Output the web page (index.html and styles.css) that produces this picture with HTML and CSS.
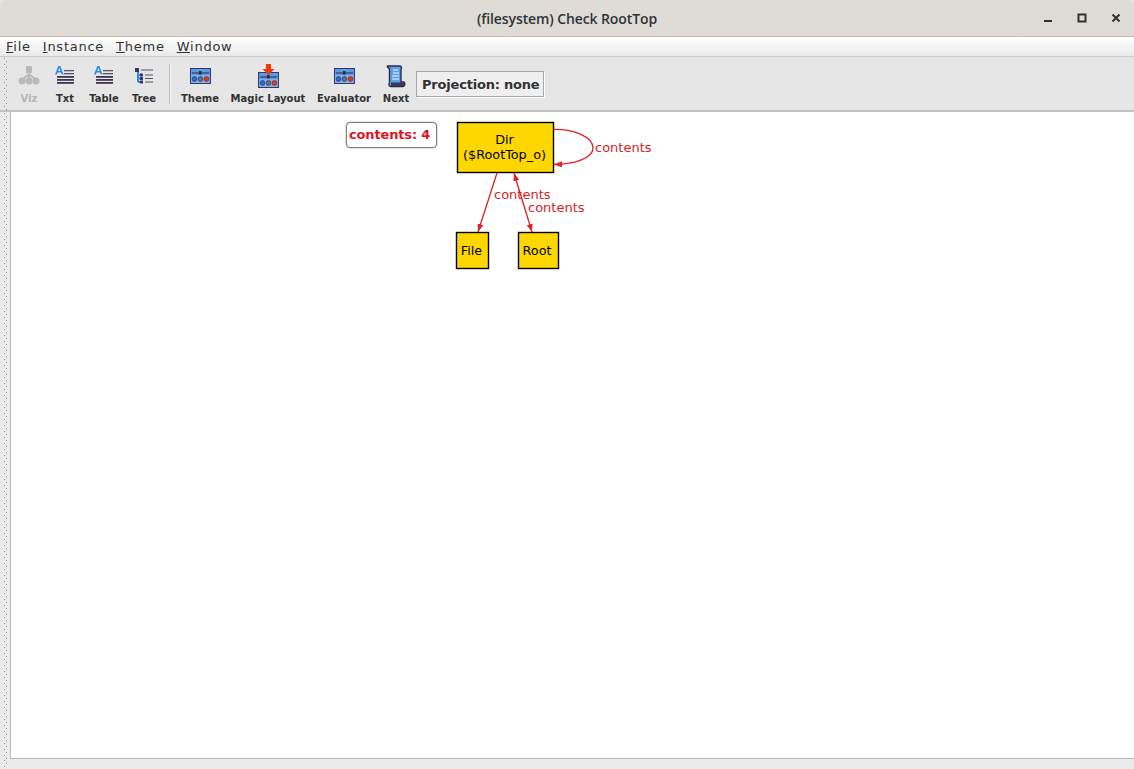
FILE: index.html
```html
<!DOCTYPE html>
<html lang="en">
<head>
<meta charset="UTF-8">
<title>(filesystem) Check RootTop</title>
<link rel="stylesheet" href="styles.css">
</head>
<body>
<svg class="defs" width="0" height="0">
  <defs>
    <g id="i-lines">
      <rect x="9" y="4" width="10" height="1.300" fill="#5b5068"/>
      <rect x="9" y="7" width="10" height="1.300" fill="#5b5068"/>
      <rect x="2" y="10" width="17" height="1.800" fill="#41344e"/>
      <rect x="2" y="13" width="17" height="1.800" fill="#41344e"/>
      <rect x="2" y="16" width="17" height="1.800" fill="#41344e"/>
      <path d="M0 8.500 3.300 0h2l3.300 8.500H6.800L6 6.400H2.600L1.800 8.500zM3.100 5h2.400L4.300 1.700z" fill="#2b8af0"/>
    </g>
    <g id="i-panel">
      <rect x=".5" y=".5" width="20" height="15" fill="#7db0ec" stroke="#3b3560"/>
      <rect x="1" y="1" width="19" height="6" fill="#5c9ae6"/>
      <rect x="2" y="4.500" width="17" height="1" fill="#2c2c44"/>
      <rect x="9" y="3" width="2.500" height="3.500" fill="#2c2c44"/>
      <circle cx="4.500" cy="11" r="2.400" fill="#1f6fe0" stroke="#2c2c44" stroke-width=".6"/>
      <circle cx="10.500" cy="11" r="2.400" fill="#6a6a80" stroke="#2c2c44" stroke-width=".6"/>
      <circle cx="16.500" cy="11" r="2.400" fill="#f0380c" stroke="#2c2c44" stroke-width=".6"/>
    </g>
  </defs>
</svg>

<header class="titlebar">
  <h1>(filesystem) Check RootTop</h1>
  <div class="win-btns">
    <svg width="12" height="12" viewBox="0 0 12 12"><rect x="2" y="8" width="8" height="2" fill="#2e3436"/></svg>
    <svg width="12" height="12" viewBox="0 0 12 12"><rect x="2.500" y="2.500" width="7" height="7" fill="none" stroke="#2e3436" stroke-width="2"/></svg>
    <svg width="12" height="12" viewBox="0 0 12 12"><path d="M2.500 2.500l7 7M9.500 2.500l-7 7" stroke="#2e3436" stroke-width="2"/></svg>
  </div>
</header>

<nav class="menubar">
  <span><u>F</u>ile</span>
  <span><u>I</u>nstance</span>
  <span><u>T</u>heme</span>
  <span><u>W</u>indow</span>
</nav>

<div class="toolbar">
  <div class="grip"></div>
  <div class="tool tool-viz disabled">
    <svg width="22" height="20" viewBox="0 0 22 20">
      <rect x="8" y="0" width="6" height="7" fill="#b9b9b9"/>
      <path d="M11 6v8M11 8 4 14M11 8l7 6" stroke="#b9b9b9" stroke-width="2" fill="none"/>
      <circle cx="4" cy="15" r="3.500" fill="#b9b9b9"/>
      <circle cx="11" cy="15" r="3.500" fill="#b9b9b9"/>
      <circle cx="18" cy="15" r="3.500" fill="#b9b9b9"/>
    </svg>
    <span>Viz</span>
  </div>
  <div class="tool tool-txt">
    <svg width="20" height="20" viewBox="0 0 20 20"><use href="#i-lines"/></svg>
    <span>Txt</span>
  </div>
  <div class="tool tool-table">
    <svg width="20" height="20" viewBox="0 0 20 20"><use href="#i-lines"/></svg>
    <span>Table</span>
  </div>
  <div class="tool tool-tree">
    <svg width="20" height="20" viewBox="0 0 20 20">
      <path d="M4 5v11M4 9h4M4 12.500h4M4 16h4" stroke="#2b8af0" stroke-width="2" fill="none"/>
      <rect x="1" y="2" width="4" height="4" fill="#3b3560"/>
      <rect x="6" y="7.500" width="3" height="3" fill="#3b3560"/>
      <rect x="6" y="11" width="3" height="3" fill="#3b3560"/>
      <rect x="6" y="14.500" width="3" height="3" fill="#3b3560"/>
      <path d="M7 4h12M11 9h8M11 12.500h8M11 16h8" stroke="#5b5068" stroke-width="1.200"/>
    </svg>
    <span>Tree</span>
  </div>
  <div class="sep"></div>
  <div class="tool tool-theme">
    <svg width="21" height="16" viewBox="0 0 21 16"><use href="#i-panel"/></svg>
    <span>Theme</span>
  </div>
  <div class="tool tool-magic">
    <svg width="21" height="24" viewBox="0 0 21 24">
      <g transform="translate(0 8)"><use href="#i-panel"/></g>
      <path d="M8 0h5v5h3.500l-6 6-6-6H8z" fill="#f03a0c"/>
    </svg>
    <span>Magic Layout</span>
  </div>
  <div class="tool tool-eval">
    <svg width="21" height="16" viewBox="0 0 21 16"><use href="#i-panel"/></svg>
    <span>Evaluator</span>
  </div>
  <div class="tool tool-next">
    <svg width="20" height="23" viewBox="0 0 20 23">
      <path d="M1.500 1h12c2 0 2.500 2 1.500 3v13h3c1.500 1 1 4.500-1 4.500H5c-2 0-2.500-2-1.500-4V4C3 3 .5 2 1.500 1z" fill="#5f9eea" stroke="#2c2c44" stroke-width="1.400"/>
      <rect x="5" y="17.500" width="13" height="3.500" fill="#39395a"/>
      <path d="M7 5h5M7 8h6M6 11h7M6 14h7" stroke="#f2f6fc" stroke-width="1"/>
    </svg>
    <span>Next</span>
  </div>
  <div class="projection">Projection: none</div>
</div>

<div class="workspace">
  <div class="rail"></div>
  <main class="canvas">
    <div class="note">contents: 4</div>
    <svg class="graph" viewBox="11 112 1123 646" width="1123" height="646">
      <defs>
        <marker id="arrow" viewBox="0 0 8 6" refX="8" refY="3" markerWidth="8" markerHeight="6" markerUnits="userSpaceOnUse" orient="auto-start-reverse">
          <path d="M0 0 8 3 0 6z" fill="#e0202a"/>
        </marker>
      </defs>
      <g class="edges">
        <path d="M553 129.500C574 129 593 137 593 148C593 158 575 164 554 164.500" marker-end="url(#arrow)"/>
        <path d="M497 173 478 232" marker-end="url(#arrow)"/>
        <path d="M514 173 532 232" marker-start="url(#arrow)" marker-end="url(#arrow)"/>
      </g>
      <g class="edge-labels">
        <text x="595" y="152">contents</text>
        <text x="494" y="199">contents</text>
        <text x="528" y="212">contents</text>
      </g>
      <g class="nodes">
        <rect x="457.500" y="122.500" width="96" height="50"/>
        <rect x="456.500" y="232.500" width="32" height="36"/>
        <rect x="518.500" y="232.500" width="40" height="36"/>
      </g>
      <g class="node-labels">
        <text x="504.500" y="144">Dir</text>
        <text x="504.500" y="159">($RootTop_o)</text>
        <text x="471.500" y="255">File</text>
        <text x="537" y="255">Root</text>
      </g>
    </svg>
  </main>
</div>
<div class="statusbar"><div class="rail"></div></div>
</body>
</html>
```

FILE: styles.css
```css
*{box-sizing:border-box;margin:0}
html,body{height:100%}
body{width:1134px;height:769px;overflow:hidden;background:#e6e6e6;font-family:"DejaVu Sans",sans-serif;display:flex;flex-direction:column}
.defs{position:absolute}

/* window title */
.titlebar{height:37px;flex:none;background:#dfdcd8;border-bottom:1px solid #c4bdb3;border-radius:6px 6px 0 0;display:flex;align-items:center;justify-content:center;position:relative}
.titlebar h1{font-family:"Open Sans",sans-serif;font-size:14px;font-weight:600;color:#2e3436;letter-spacing:-.1px}
.win-btns{position:absolute;right:12px;top:12px;display:flex;gap:22px}

/* menu */
.menubar{height:20px;flex:none;background:linear-gradient(#fff,#e9e9e9);display:flex;gap:12px;padding-left:6px;font-size:13px;line-height:19px;color:#333;letter-spacing:.75px;border-bottom:1px solid #c9c9c9}

/* toolbar */
.toolbar{height:55px;flex:none;display:flex;align-items:flex-start;background:#e6e6e6;border-bottom:2px solid #c2c2c2;position:relative}
.grip{width:10px;height:100%;margin-right:5px;background-image:linear-gradient(#8a8fa0 1px,transparent 1px),linear-gradient(#8a8fa0 1px,transparent 1px);background-size:1px 6px;background-position:4px 1px,6px 4px;background-repeat:repeat-y}
.tool{display:flex;flex-direction:column;align-items:center;height:52px;color:#333;font-size:10px;font-weight:700;position:relative}
.tool svg{position:absolute;top:9px}
.tool span{position:absolute;top:36px;white-space:nowrap}
.tool.disabled{color:#b5b5b5}
.tool-viz{width:28px}
.tool-txt{width:44px}
.tool-table{width:34px}
.tool-tree{width:46px}
.tool-theme{width:38px}
.tool-magic{width:98px}
.tool-eval{width:54px}
.tool-next{width:50px}
.tool-magic svg{top:7px}
.tool-next svg{top:8px}
.tool-theme svg,.tool-eval svg{top:11px}
.sep{width:2px;height:40px;margin:7px 10px 0 2px;background:#bdbdbd;border-right:1px solid #f4f4f4}
.projection{margin:14px 0 0 -5px;width:128px;height:26px;border:1px solid #a8a8a8;background:#efefef;box-shadow:1px 1px 0 #fff;font-size:13px;font-weight:700;line-height:25px;padding-left:5px;color:#333;letter-spacing:-.2px;white-space:nowrap}

/* main area */
.workspace{flex:1;display:flex;min-height:0}
.rail{width:10px;height:100%;flex:none;background-color:#ececec;background-image:linear-gradient(#8a8fa0 1px,transparent 1px),linear-gradient(#8a8fa0 1px,transparent 1px);background-size:1px 6px;background-position:4px 1px,6px 4px;background-repeat:repeat-y}
.canvas{flex:1;position:relative;background:#fff;border-left:1px solid #bdbdbd;border-bottom:1px solid #b8b8b8}
.statusbar{height:10px;flex:none;background:#ececec}

/* graph */
.graph{position:absolute;left:0;top:0}
.edges path{fill:none;stroke:#e0202a;stroke-width:1.300}
.edge-labels text{font-size:13px;fill:#d8232a}
.nodes rect{fill:#ffd700;stroke:#000;stroke-width:1.400}
.node-labels text{font-size:12.800px;fill:#000;text-anchor:middle}
.note{position:absolute;left:335px;top:10px;width:91px;height:26px;background:#fff;border:1px solid #808080;border-radius:4px;box-shadow:0 0 0 .5px #c4c4c4;color:#e0141e;font-size:13px;font-weight:700;line-height:24px;padding-left:2px;letter-spacing:-.15px;white-space:nowrap}
```
